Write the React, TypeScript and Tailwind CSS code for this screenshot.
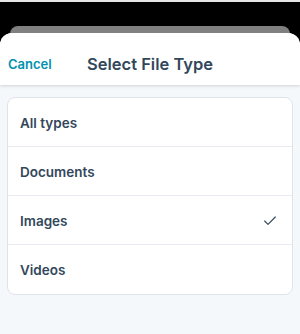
import { Check } from "lucide-react";

const types = ["All types", "Documents", "Images", "Videos"];

const App = () => {
  const selected = "Images";

  return (
    <div className="w-[300px] h-[334px] overflow-hidden bg-black flex flex-col font-['Inter',sans-serif]">
      <div className="h-[2px] bg-[#e6e6e6]" />
      <div className="relative flex-1 flex flex-col pt-[24px]">
        <div className="absolute top-[24px] left-[10px] right-[10px] h-[20px] rounded-t-[8px] bg-[#808080]" />
        <div className="relative mt-[7px] flex-1 flex flex-col rounded-t-[12px] bg-[#f5f8fa] overflow-hidden">
          <div className="relative h-[52px] bg-white shadow-[0_1px_3px_rgba(0,0,0,0.15)] flex items-center">
            <button className="absolute left-[8px] top-[22px] text-[13px] font-semibold text-[#0091ae]">
              Cancel
            </button>
            <h1 className="w-full text-center text-[16.5px] font-semibold text-[#33475b] pt-[11px]">
              Select File Type
            </h1>
          </div>
          <div className="px-[7px] pt-[12px]">
            <div className="bg-white border border-[#dfe3eb] rounded-[8px]">
              {types.map((t, i) => (
                <div
                  key={t}
                  className={`h-[49px] flex items-center justify-between pl-[12px] pr-[14px] pt-[2px] ${
                    i < types.length - 1 ? "border-b border-[#e8ecf2]" : ""
                  }`}
                >
                  <span className="text-[13.5px] font-semibold text-[#33475b]">{t}</span>
                  {t === selected && <Check size={16} strokeWidth={1.75} className="text-[#33475b]" />}
                </div>
              ))}
            </div>
          </div>
        </div>
      </div>
    </div>
  );
};

export default App;
